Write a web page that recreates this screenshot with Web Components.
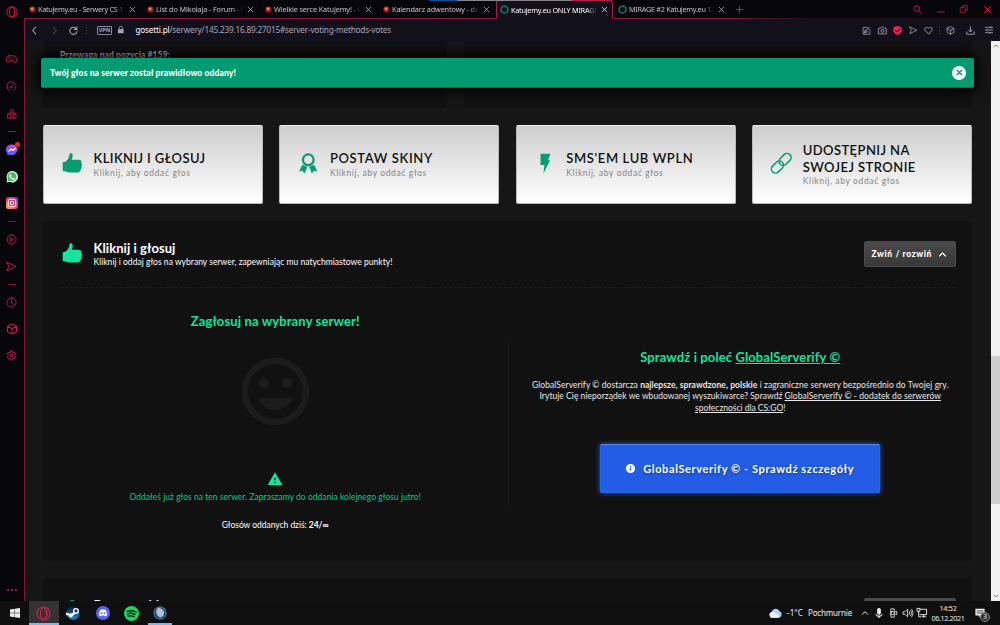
<!DOCTYPE html>
<html lang="pl">
<head>
<meta charset="utf-8">
<title>Katujemy.eu ONLY MIRAGE</title>
<style>
body {
    margin: 0;
    width: 1000px;
    height: 625px;
    overflow: hidden;
    background: #161616;
    color: #fff;
    font-family: Lato, "Open Sans", sans-serif;
}
</style>
</head>
<body>
<browser-window></browser-window>

<script>
const line = (d, w = 2.1) => `<path d="${d}" fill="none" stroke="currentColor" stroke-width="${w}" stroke-linecap="round" stroke-linejoin="round"/>`;
const fill = (d, c = 'currentColor') => `<path d="${d}" fill="${c}" fill-rule="evenodd"/>`;

const ICONS = {
    opera: `<ellipse cx="12" cy="12" rx="10.5" ry="10.5" fill="none" stroke="currentColor" stroke-width="1.8"/><ellipse cx="12" cy="12" rx="5" ry="9" fill="none" stroke="currentColor" stroke-width="1.8"/><path d="M14 2.5c5 3 5 16 0 19" fill="none" stroke="currentColor" stroke-width="1.3"/>`,
    gamepad: line('M6 4h12c3 0 5 4 5 10 0 5-3 6-5 3.500L15.500 14.500h-7l-2.500 3c-2 2.500-5 1.500-5-3.500C1 8 3 4 6 4zM6 9h4M16 8v3'),
    gauge: line('M7 20.500A10 10 0 1 1 20.500 7M21.800 11A10 10 0 0 1 17 20.500M12 13l5-6M10 12a2 2 0 1 0 3 2'),
    bag: line('M3 10h18l1 12H2zM9 10V2h6v8M3 14h18M8 17v4M12 17v4M16 17v4'),
    play: line('M12 2a10 10 0 1 1 0 20a10 10 0 1 1 0-20M9.500 8l6.500 4-6.500 4z'),
    send: line('M2 2.500L22 12L2 21.500L6 12z'),
    clock: line('M12 2a10 10 0 1 1 0 20a10 10 0 1 1 0-20M12 6v7l4 3'),
    cube: line('M12 2l9 4.500v11L12 22l-9-4.500v-11zM3 6.500l9 5 9-5M12 11.500V22'),
    gear: line('M10 2h4l1 3.500 3-1 3 4-2.500 3.500 2.500 3.500-3 4-3-1-1 3.500h-4l-1-3.500-3 1-3-4 2.500-3.500-2.500-3.500 3-4 3 1zM12 9a3 3 0 1 1 0 6a3 3 0 1 1 0-6'),
    dots: fill('M0 12a2.600 2.600 0 1 0 5.200 0a2.600 2.600 0 1 0-5.200 0M9.400 12a2.600 2.600 0 1 0 5.200 0a2.600 2.600 0 1 0-5.200 0M18.800 12a2.600 2.600 0 1 0 5.200 0a2.600 2.600 0 1 0-5.200 0'),
    messenger: `<defs><linearGradient id="m" x1="0" y1="1" x2="1" y2="0"><stop offset="0" stop-color="#168dff"/><stop offset=".55" stop-color="#9a40f4"/><stop offset="1" stop-color="#ff6d70"/></linearGradient></defs><path d="M12 1a11 10.500 0 1 1-5 20l-4 2v-4A10.500 10.500 0 0 1 12 1z" fill="url(#m)"/>` + line('M6 14l4-4 4 3 4-4', 2.4).replace('currentColor', '#fff'),
    whatsapp: fill('M1 23l1.500-6A11.500 11.500 0 1 1 7 21.500z', '#e8f3ea') + fill('M3.500 20.500l1-4A9 9 0 1 1 8 19.500z', '#3fbd55') + fill('M8 6.500l2 .3 1 2.700-1.200 1.500c1 2 2.200 3 4 3.700l1.500-1.500 2.600 1.400c0 2.600-2 3.400-4.500 2.700-4-1.300-7-4.600-7-7.600 0-1.500.6-2.600 1.600-3.200z', '#fff'),
    instagram: `<defs><linearGradient id="i" x1="0" y1="1" x2=".8" y2="0"><stop offset="0" stop-color="#ffc850"/><stop offset=".45" stop-color="#f0404f"/><stop offset=".75" stop-color="#c536a4"/><stop offset="1" stop-color="#6b4bd8"/></linearGradient></defs><rect width="24" height="24" rx="5" fill="url(#i)"/><rect x="4.500" y="4.500" width="15" height="15" rx="4" fill="none" stroke="#fff" stroke-width="2"/><circle cx="12" cy="12" r="3.500" fill="none" stroke="#fff" stroke-width="2"/>`,
    fav: `<circle cx="12" cy="12" r="11" fill="#7c1d16"/><circle cx="11" cy="10" r="7" fill="#d9452f"/><circle cx="10" cy="9" r="3" fill="#f3b08e"/>`,
    ring: `<circle cx="12" cy="12" r="9.500" fill="none" stroke="#078b68" stroke-width="4" stroke-dasharray="9 1"/>`,
    x: line('M4 4l16 16M20 4L4 20', 2.6),
    close: line('M4 4l16 16M20 4L4 20', 4.5),
    plus: line('M12 1v22M1 12h22', 3.2),
    search: line('M10 2a7.500 7.500 0 1 1 0 15a7.500 7.500 0 1 1 0-15M15.500 15.500L22 22', 2.4),
    minimize: line('M2 21h20', 2.4),
    restore: line('M2 8h14v14H2zM8 8V2h14v14h-6', 2.2),
    back: line('M15 3l-8 9 8 9', 2.8),
    forward: line('M9 3l8 9-8 9', 2.8),
    reload: line('M20 8A9.500 9.500 0 1 0 21 15M21 2v7h-7', 2.8),
    lock: fill('M3 10h18v13H3z') + line('M7 10V6a5 5 0 0 1 10 0v4', 2.6),
    edit: line('M12 4H3v18h18v-9M9 15l11-12M6 18l3-8 5 5zM14 4l7 7', 2),
    camera: line('M2 6h5l2-3h6l2 3h5v15H2zM12 9a4 4 0 1 1 0 8a4 4 0 1 1 0-8', 2.2),
    shield: fill('M12 0c3 1.500 6 2 10 2.500 1.500 3 1.500 5 1.500 8C23.500 17 18 22 12 24 6 22 .5 17 .5 10.500c0-3 0-5 1.500-8C6 2 9 1.500 12 0z', '#f5214d') + line('M7 12l4 4 7-8', 2.8).replace('currentColor', '#14101c'),
    heart: line('M12 21L3 12C-1 7 6 0 12 6c6-6 13 1 9 6z', 2.4),
    download: line('M12 2v13M7 11l5 5 5-5M2 16v6h20v-6', 2.4),
    sliders: line('M1 4h22M1 12h22M1 20h22M17 2v4M6 10v4M15 18v4', 2.4),
    up: line('M4 16l8-8 8 8', 3),
    down: line('M4 8l8 8 8-8', 3),
    thumb: fill('M10.500.2c1.400.1 2 1.200 2 2.700 0 2-.7 3.600-1.200 5h8c2.300 0 3.500 1 3.500 2.600 0 .8-.4 1.300-.4 1.300s1 .8 1 2c0 1.300-.8 1.900-.8 1.900s.6.8.4 2c-.2 1.200-1.200 1.700-1.200 1.700s.3 2.400-2 3c-2.500.7-12 1-15.500-.8L.8 21V10.800l3.200-.5C7 8.500 8.800 4.500 8.800 1.300c0-.8.8-1.200 1.700-1.100z'),
    medal: `<circle cx="12" cy="8" r="6.300" fill="none" stroke="currentColor" stroke-width="2.600"/>` + fill('M5.300 13.600c1.400 1.400 3.200 2.200 5.700 2.500l-3.300 8-2.500-3.200-4 .7zM18.700 13.600c-1.400 1.400-3.200 2.200-5.700 2.500l3.300 8 2.500-3.200 4 .7z'),
    bolt: fill('M6.500 1H18l-2.700 7.500h2.500L9.800 24l1.200-10H6.500z'),
    link: `<g fill="none" stroke="currentColor" stroke-width="1.800" transform="rotate(-45 12 12)"><rect x="-2.300" y="7.200" width="16" height="9.600" rx="4.800"/><rect x="10.300" y="7.200" width="16" height="9.600" rx="4.800"/></g>`,
    smile: fill('M11.990 2C6.470 2 2 6.480 2 12s4.470 10 9.990 10C17.520 22 22 17.520 22 12S17.520 2 11.990 2zM12 20.100c-4.470 0-8.100-3.630-8.100-8.100s3.630-8.100 8.100-8.100 8.100 3.630 8.100 8.100-3.630 8.100-8.100 8.100zM15.500 11c.83 0 1.500-.67 1.500-1.500S16.330 8 15.500 8 14 8.670 14 9.500s.67 1.500 1.500 1.500zM8.500 11c.83 0 1.500-.67 1.500-1.500S9.330 8 8.500 8 7 8.670 7 9.500 7.670 11 8.500 11zM12 17.500c2.330 0 4.310-1.460 5.110-3.500H6.890c.8 2.040 2.780 3.500 5.110 3.500z'),
    warning: fill('M1 21h22L12 2zM13 18h-2v-2h2zM13 14h-2v-4h2z'),
    info: fill('M12 2a10 10 0 1 0 0 20a10 10 0 0 0 0-20zM13.200 17h-2.400v-6h2.400zM13.200 9h-2.400V6.600h2.400z'),
    windows: fill('M0 3.500l10.500-1.500v9.500H0zM11.500 1.800L24 0v11.500H11.500zM0 12.500h10.500V22L0 20.500zM11.500 12.500H24V24l-12.500-1.800z'),
    steam: `<defs><linearGradient id="s" x1="0" y1="0" x2="0" y2="1"><stop offset="0" stop-color="#0c1536"/><stop offset="1" stop-color="#1a8fc8"/></linearGradient></defs><circle cx="12" cy="12" r="11.500" fill="url(#s)"/><circle cx="17" cy="8.500" r="4" fill="none" stroke="#fff" stroke-width="2.300"/><circle cx="8.500" cy="16" r="3.500" fill="#fff"/>` + fill('M0 11l8 3.200 5.500-4 3 3L10 18l-10-3z', '#fff'),
    discord: `<circle cx="12" cy="12" r="12" fill="#5865f2"/>` + fill('M8 6.500c2.500-.8 5.500-.8 8 0 2 2.500 3 5.500 3 9.500-1.200 1-2.500 1.500-4 1.700l-.8-1.500h-4.400L9 17.700c-1.500-.2-2.800-.7-4-1.700 0-4 1-7 3-9.500zM9.500 10.500a1.600 1.900 0 1 0 .01 0zM14.500 10.500a1.600 1.900 0 1 0 .01 0z', '#fff'),
    spotify: `<circle cx="12" cy="12" r="12" fill="#1ed760"/>` + line('M5 8.500c5-1.500 10-1 14.500 1.300M5.800 12.300c4-1.200 8.300-.7 12 1.300M6.500 16c3.500-.9 6.800-.5 10 1.200', 2.200).replace('currentColor', '#0d1a11'),
    orb: `<circle cx="12" cy="12" r="11.500" fill="#3a6d92"/><circle cx="12" cy="12" r="9" fill="#1d4361"/><path d="M9 3c5 0 10 4 10 9s-4 8-7 7.500-6.500-5-6.500-9.500 2.500-5 3.500-7z" fill="#b4bddb"/>`,
    cloud: fill('M6 20a5.500 5.500 0 0 1-1-10.800A7.500 7.500 0 0 1 19 7.500 6.500 6.500 0 0 1 18 20z', '#a9d5f5') + fill('M6 20a5.500 5.500 0 0 1-1-10.800c4-1 7 1 7.500 4C16 12 19 15 18 20z', '#e3f2fd'),
    mic: fill('M12 0c3 0 4.500 2 4.500 4.500V12c0 2-2 4-4.500 4s-4.500-2-4.500-4V4.500C7.500 2 9 0 12 0zM4 12c1 5 4 6 8 6s7-1 8-6v4c-1 3-3 4.500-6.500 5v3h-3v-3C7 20.500 5 19 4 16z'),
    webcam: line('M7 8V2h8v6M7 16v6h8v-6M11 8a4 4 0 1 1 0 8a4 4 0 1 1 0-8M16 10l5-2v8l-5-2M7 8a6 6 0 0 0 0 8', 2),
    sound: line('M1 9h4l6-6v18l-6-6H1zM14.500 8c2 2.500 2 5.500 0 8M18 5.500c3.500 4 3.500 9 0 13M21 3c4 5 4 13 0 18', 1.9),
    network: line('M7 3h16v13H7M12 21h9M16 16v5M1 1h6v7H1zM4 8v13h5', 2.200),
    note: fill('M1 2h22v16h-8l-5 5v-5H1z') + line('M5 7h14M5 12h14', 1.800).replace('currentColor', '#101010')
};

class GxIcon extends HTMLElement {
    constructor() {
        super();
        this.attachShadow({ mode: 'open' });
    }

    connectedCallback() {
        const size = this.getAttribute('size') || 12;
        this.shadowRoot.innerHTML = `
<style>
:host { display: block; flex: none; width: ${size}px; height: ${size}px; }
svg { display: block; width: 100%; height: 100%; overflow: visible; }
</style>
<svg viewBox="0 0 24 24">${ICONS[this.getAttribute('name')]}</svg>`;
    }
}

// One line of text, tracked so that it fills the given width
class FitText extends HTMLElement {
    constructor() {
        super();
        this.attachShadow({ mode: 'open' }).innerHTML = `
<style>
:host { display: block; flex: none; width: max-content; white-space: nowrap; }
</style>
<slot></slot>`;
    }

    connectedCallback() {
        const wanted = Number(this.getAttribute('w'));
        this.style.letterSpacing = '0px';
        const natural = this.getBoundingClientRect().width;
        this.style.letterSpacing = (wanted - natural) / this.textContent.trim().length + 'px';
    }
}

class BrowserTab extends HTMLElement {
    constructor() {
        super();
        this.attachShadow({ mode: 'open' });
    }

    connectedCallback() {
        this.shadowRoot.innerHTML = `
<style>
:host {
    box-sizing: border-box;
    display: flex;
    align-items: center;
    width: 118px;
    padding: 0 6px 0 5px;
    border-bottom: 1px solid #8c1533;
    color: #c4c2c8;
    font: 7.300px/18px "Noto Sans", sans-serif;
}
:host([active]) {
    width: 117px;
    border: 1px solid #b31b40;
    border-bottom-color: #13101b;
    border-radius: 3px 3px 0 0;
    background: #13101b;
    color: #fff;
    line-height: 16px;
    padding: 0 4px 0 3px;
}
.label {
    flex: 1;
    overflow: hidden;
    margin: 0 4px 0 2px;
    -webkit-mask-image: linear-gradient(90deg, #000 88%, transparent);
    mask-image: linear-gradient(90deg, #000 88%, transparent);
}
</style>
<gx-icon name="${this.getAttribute('icon')}" size="${this.getAttribute('icon') === 'ring' ? 9 : 7}"></gx-icon>
<div class="label"><slot></slot></div>
<gx-icon name="x" size="7"></gx-icon>`;
    }
}

class TabBar extends HTMLElement {
    constructor() {
        super();
        this.attachShadow({ mode: 'open' }).innerHTML = `
<style>
:host { position: relative; display: flex; height: 19px; background: #07060b; color: #d41e4b; }
.rest { flex: 1; display: flex; align-items: center; border-bottom: 1px solid; border-image: linear-gradient(90deg, #8c1533, #1b101d 30%) 1; padding: 0 8px 0 5px; }
.controls { margin-left: auto; display: flex; gap: 15px; }
.strip { position: absolute; left: 405px; top: 0; width: 183px; height: 1px; background: linear-gradient(90deg, #0b4d8e 28px, #85858a 28px 143px, #b31b40 143px); }
browser-tab { flex: none; }
</style>
<browser-tab icon="fav"><fit-text w="85">Katujemy.eu - Serwery CS 1</fit-text></browser-tab>
<browser-tab icon="fav"><fit-text w="89">List do Mikołaja - Forum - K</fit-text></browser-tab>
<browser-tab icon="fav"><fit-text w="88">Wielkie serce Katujemy! - C</fit-text></browser-tab>
<browser-tab icon="fav"><fit-text w="88">Kalendarz adwentowy - dzi</fit-text></browser-tab>
<browser-tab icon="ring" active><fit-text w="87">Katujemy.eu ONLY MIRAGE</fit-text></browser-tab>
<browser-tab icon="ring"><fit-text w="86">MIRAGE #2 Katujemy.eu 12</fit-text></browser-tab>
<div class="rest">
    <gx-icon name="plus" size="7"></gx-icon>
    <div class="controls">
        <gx-icon name="search" size="9"></gx-icon>
        <gx-icon name="minimize" size="8"></gx-icon>
        <gx-icon name="restore" size="8"></gx-icon>
        <gx-icon name="x" size="9"></gx-icon>
    </div>
</div>
<div class="strip"></div>`;
    }
}

class ToolBar extends HTMLElement {
    constructor() {
        super();
        this.attachShadow({ mode: 'open' }).innerHTML = `
<style>
:host { display: flex; align-items: center; height: 22px; padding: 0 7px 0 5px; background: #12101a; color: #aaa4b9; }
.nav { display: flex; align-items: center; gap: 10.500px; }
.dim { opacity: .35; }
.sep { width: 1px; height: 7px; background: repeating-linear-gradient(#4a4555 0 1px, transparent 1px 3px); margin: 0 10px 0 8px; }
.vpn { box-sizing: border-box; width: 15px; height: 9px; border: 1px solid #8d879c; border-radius: 1px; font: bold 5.500px/7px "Noto Sans", sans-serif; text-align: center; margin-right: 5px; }
.url { margin-left: 11px; font: 8.200px/20px "Noto Sans", sans-serif; }
.url b { color: #fff; font-weight: 400; }
.tools { display: flex; align-items: center; margin-left: auto; gap: 6.500px; }
.tools .sep { margin: 0 0 0 -.500px; }
.wide { margin: 0 4px; }
</style>
<div class="nav">
    <gx-icon name="back" size="9"></gx-icon>
    <gx-icon class="dim" name="forward" size="9"></gx-icon>
    <gx-icon name="reload" size="9"></gx-icon>
</div>
<div class="sep"></div>
<div class="vpn">VPN</div>
<gx-icon name="lock" size="7.500"></gx-icon>
<fit-text class="url" w="255.500"><b>gosetti.pl</b>/serwery/145.239.16.89:27015#server-voting-methods-votes</fit-text>
<div class="tools">
    <gx-icon name="edit" size="9"></gx-icon>
    <gx-icon name="camera" size="9"></gx-icon>
    <gx-icon name="shield" size="9"></gx-icon>
    <gx-icon name="send" size="8.500"></gx-icon>
    <gx-icon name="heart" size="9"></gx-icon>
    <div class="sep"></div>
    <gx-icon name="cube" size="9"></gx-icon>
    <gx-icon class="wide" name="download" size="9"></gx-icon>
    <gx-icon name="sliders" size="8"></gx-icon>
</div>`;
    }
}

class SideBar extends HTMLElement {
    constructor() {
        super();
        this.attachShadow({ mode: 'open' }).innerHTML = `
<style>
:host { box-sizing: border-box; display: flex; flex-direction: column; align-items: center; width: 25px; background: #07060b; color: #c41c46; padding-right: 1px; }
.logo { color: #d41e4b; margin: 6px 0 28.500px; }
.item { position: relative; display: flex; align-items: center; height: 26.900px; }
hr { width: 8px; height: 1px; margin: 4px 0; border: 0; background: #8c1533; }
.badge { position: absolute; right: -2px; top: 6px; width: 5px; height: 5px; border-radius: 50%; background: #fa1e3d; }
.more { margin: auto 0 6px; }
</style>
<gx-icon class="logo" name="opera" size="12"></gx-icon>
<div class="item"><gx-icon name="gamepad" size="11"></gx-icon></div>
<div class="item"><gx-icon name="gauge" size="11"></gx-icon></div>
<div class="item"><gx-icon name="bag" size="10"></gx-icon></div>
<hr>
<div class="item"><gx-icon name="messenger" size="12"></gx-icon><span class="badge"></span></div>
<div class="item"><gx-icon name="whatsapp" size="12"></gx-icon></div>
<div class="item"><gx-icon name="instagram" size="12"></gx-icon></div>
<hr>
<div class="item"><gx-icon name="play" size="11"></gx-icon></div>
<div class="item"><gx-icon name="send" size="11"></gx-icon></div>
<hr>
<div class="item"><gx-icon name="clock" size="11"></gx-icon></div>
<div class="item"><gx-icon name="cube" size="12"></gx-icon></div>
<div class="item"><gx-icon name="gear" size="11"></gx-icon></div>
<gx-icon class="more" name="dots" size="10"></gx-icon>`;
    }
}

class VoteCard extends HTMLElement {
    constructor() {
        super();
        this.attachShadow({ mode: 'open' });
    }

    connectedCallback() {
        this.shadowRoot.innerHTML = `
<style>
:host {
    box-sizing: border-box;
    display: flex;
    align-items: center;
    gap: 11px;
    height: 79px;
    padding-left: 18px;
    border: 1px solid #b9b9b9;
    border-top-color: #eee;
    border-radius: 2px;
    background: linear-gradient(#cdcdcd, #fff);
    color: #111;
    font: 600 13px/16.600px Lato, sans-serif;
}
gx-icon { color: #079c71; margin-bottom: 2px; }
.hint { color: #858585; font: 8.500px/12px Lato, sans-serif; }
</style>
<gx-icon name="${this.getAttribute('icon')}" size="20.500"></gx-icon>
<div>
    <slot></slot>
    <fit-text class="hint" w="97">Kliknij, aby oddać głos</fit-text>
</div>`;
    }
}

class ToastMessage extends HTMLElement {
    constructor() {
        super();
        this.attachShadow({ mode: 'open' }).innerHTML = `
<style>
:host {
    box-sizing: border-box;
    display: flex;
    align-items: center;
    justify-content: space-between;
    height: 30px;
    padding: 0 8px 0 9px;
    border-bottom: 1px solid #087552;
    border-radius: 2px;
    background: #029b71;
    box-shadow: 0 0 14px 3px #000;
    font: 900 8.500px/12px Lato, sans-serif;
}
.close { display: flex; align-items: center; justify-content: center; width: 14px; height: 14px; border-radius: 50%; background: #fff; color: #079c71; }
</style>
<slot></slot>
<div class="close"><gx-icon name="close" size="7"></gx-icon></div>`;
    }
}

class VotePanel extends HTMLElement {
    constructor() {
        super();
        this.attachShadow({ mode: 'open' });
    }

    connectedCallback() {
        this.shadowRoot.innerHTML = `
<style>
:host { box-sizing: border-box; display: block; height: 340px; border-radius: 4px; background: #111; }
header {
    display: flex;
    align-items: center;
    height: 66px;
    margin: 0 16.500px 0 17px;
    padding: 0 0 0 2px;
    border-bottom: 1px dashed #1c1c1c;
}
header gx-icon { color: #12e59d; margin: 0 11px 2px 0; }
.title { font: bold 13px/16px Lato, sans-serif; }
.sub { font: 8.500px/12px Lato, sans-serif; }
.toggle {
    box-sizing: border-box;
    display: flex;
    align-items: center;
    gap: 6px;
    height: 26px;
    width: 92px;
    margin-left: auto;
    padding-left: 7px;
    border: 1px solid #4c4c4c;
    border-radius: 2px;
    background: linear-gradient(#4b4b4b, #383838);
    font: 900 8.500px/12px Lato, sans-serif;
}
.toggle gx-icon { color: #fff; margin: 0; }
</style>
<header>
    <gx-icon name="${this.getAttribute('icon')}" size="20.500"></gx-icon>
    <div>
        <div class="title"><slot name="title"></slot></div>
        <div class="sub"><slot name="sub"></slot></div>
    </div>
    <div class="toggle"><fit-text w="60.500">Zwiń / rozwiń</fit-text><gx-icon name="up" size="9"></gx-icon></div>
</header>
<slot></slot>`;
    }
}

class VoteStatus extends HTMLElement {
    constructor() {
        super();
        this.attachShadow({ mode: 'open' }).innerHTML = `
<style>
:host { display: flex; flex-direction: column; align-items: center; color: #12e59d; font: 8.500px/12px Lato, sans-serif; }
.head { font: bold 13px/16px Lato, sans-serif; margin-top: 25px; }
.face { color: #1c1c1c; margin: 22px 0 39px; }
.text { margin-top: 4px; color: #0cc885; }
.count { color: #fff; margin-top: 16px; }
</style>
<fit-text class="head" w="169">Zagłosuj na wybrany serwer!</fit-text>
<gx-icon class="face" name="smile" size="81"></gx-icon>
<gx-icon name="warning" size="16"></gx-icon>
<fit-text class="text" w="291.500">Oddałeś już głos na ten serwer. Zapraszamy do oddania kolejnego głosu jutro!</fit-text>
<fit-text class="count" w="107">Głosów oddanych dziś: <b>24/∞</b></fit-text>`;
    }
}

class ServerPromo extends HTMLElement {
    constructor() {
        super();
        this.attachShadow({ mode: 'open' }).innerHTML = `
<style>
:host { box-sizing: border-box; display: flex; flex-direction: column; align-items: center; height: 167px; margin-top: 53px; border-left: 1px solid #1a1a1a; font: 8.500px/11.400px Lato, sans-serif; color: #e8e8e8; }
.head { font: bold 13px/16px Lato, sans-serif; color: #12e59d; margin: 8px 0 15px; }
.button {
    box-sizing: border-box;
    display: flex;
    align-items: center;
    gap: 7px;
    width: 280px;
    height: 49px;
    margin-top: 30px;
    padding-left: 24px;
    border: 1px solid #2a62e8;
    border-top-color: #5583ee;
    border-radius: 2px;
    background: #235de5;
    box-shadow: 0 0 5px #2b62d8;
    color: #fff;
    font: bold 11px/14px Lato, sans-serif;
    text-shadow: 0 1px 3px #0006;
}
</style>
<fit-text class="head" w="200">Sprawdź i poleć <u>GlobalServerify ©</u></fit-text>
<fit-text w="416.500">GlobalServerify © dostarcza <b>najlepsze, sprawdzone, polskie</b> i zagraniczne serwery bezpośrednio do Twojej gry.</fit-text>
<fit-text w="401.500">Irytuje Cię nieporządek we wbudowanej wyszukiwarce? Sprawdź <u>GlobalServerify © - dodatek do serwerów</u></fit-text>
<fit-text w="90.500"><u>społeczności dla CS:GO</u>!</fit-text>
<div class="button"><gx-icon name="info" size="11"></gx-icon><fit-text w="211">GlobalServerify © - Sprawdź szczegóły</fit-text></div>`;
    }
}

class ServerPage extends HTMLElement {
    constructor() {
        super();
        this.attachShadow({ mode: 'open' }).innerHTML = `
<style>
:host { position: relative; display: block; overflow: hidden; padding: 0 19px 0 18px; background: #161616; }
.stats { display: grid; grid-template-columns: 404px 1fr; gap: 17px; height: 67px; }
.stats div { padding: 8px 17px; border-radius: 0 0 4px 4px; background: #111; color: #ccc; font: bold 8.500px/12px Lato, sans-serif; }
.cards { display: grid; grid-template-columns: repeat(4, 1fr); gap: 16.700px; margin: 17px 0; }
.columns { display: grid; grid-template-columns: 1fr 1fr; }
vote-panel + vote-panel { margin-top: 17px; }
toast-message { position: absolute; left: 16px; right: 17px; top: 17px; }
</style>
<div class="stats">
    <div><fit-text w="110">Przewaga nad pozycją #159:</fit-text></div>
    <div></div>
</div>
<div class="cards">
    <vote-card icon="thumb"><fit-text w="112">KLIKNIJ I GŁOSUJ</fit-text></vote-card>
    <vote-card icon="medal"><fit-text w="103">POSTAW SKINY</fit-text></vote-card>
    <vote-card icon="bolt"><fit-text w="127">SMS'EM LUB WPLN</fit-text></vote-card>
    <vote-card icon="link"><fit-text w="107">UDOSTĘPNIJ NA</fit-text><fit-text w="113">SWOJEJ STRONIE</fit-text></vote-card>
</div>
<vote-panel icon="thumb">
    <fit-text slot="title" w="82">Kliknij i głosuj</fit-text>
    <fit-text slot="sub" w="299">Kliknij i oddaj głos na wybrany serwer, zapewniając mu natychmiastowe punkty!</fit-text>
    <div class="columns">
        <vote-status></vote-status>
        <server-promo></server-promo>
    </div>
</vote-panel>
<vote-panel icon="medal">
    <fit-text slot="title" w="81">Postaw skiny</fit-text>
    <span slot="sub">&nbsp;</span>
</vote-panel>
<toast-message><fit-text w="186">Twój głos na serwer został prawidłowo oddany!</fit-text></toast-message>`;
    }
}

class PageScrollbar extends HTMLElement {
    constructor() {
        super();
        this.attachShadow({ mode: 'open' }).innerHTML = `
<style>
:host { display: flex; flex-direction: column; align-items: center; background: #f0f0f0; color: #555; padding: 2px 0; }
.thumb { width: 9px; height: 148px; margin: 307px 0 auto; background: #cdcdcd; }
</style>
<gx-icon name="up" size="6"></gx-icon>
<div class="thumb"></div>
<gx-icon name="down" size="6"></gx-icon>`;
    }
}

class TaskBar extends HTMLElement {
    constructor() {
        super();
        this.attachShadow({ mode: 'open' }).innerHTML = `
<style>
:host { display: flex; height: 24px; background: #0f0f0f; color: #eee; font: 8px/10px "Noto Sans", sans-serif; }
.app { box-sizing: border-box; display: flex; align-items: center; justify-content: center; flex: none; width: 29.300px; border-bottom: 2px solid transparent; padding-top: 2px; }
.app:first-child { width: 30px; padding-right: 2px; }
.app.on { background: #333; border-color: #76b9ed; color: #d41e4b; }
.app.run { width: 24px; margin-left: 2px; border-color: #76b9ed; }
.tray { display: flex; align-items: center; margin-left: auto; padding-right: 15px; }
.tray > * { margin-left: 5px; }
.tray > .tight { margin-left: 4px; }
.tray > .arrow { margin-left: 9px; }
.tray > .clock { margin-left: 4px; width: 34px; display: flex; flex-direction: column; align-items: center; font-size: 7.200px; }
.tray > .note { position: relative; margin-left: 10px; }
.note span { position: absolute; left: 5px; top: 4px; width: 8px; height: 8px; border: 1px solid #888; border-radius: 50%; background: #333; font: 7px/8px "Noto Sans", sans-serif; text-align: center; }
</style>
<div class="app"><gx-icon name="windows" size="10"></gx-icon></div>
<div class="app on"><gx-icon name="opera" size="15"></gx-icon></div>
<div class="app"><gx-icon name="steam" size="14"></gx-icon></div>
<div class="app"><gx-icon name="discord" size="14"></gx-icon></div>
<div class="app"><gx-icon name="spotify" size="15"></gx-icon></div>
<div class="app run"><gx-icon name="orb" size="14"></gx-icon></div>
<div class="tray">
    <gx-icon name="cloud" size="13"></gx-icon>
    <fit-text w="16">-1°C</fit-text>
    <fit-text w="44">Pochmurnie</fit-text>
    <gx-icon class="arrow" name="up" size="8"></gx-icon>
    <gx-icon name="mic" size="10"></gx-icon>
    <gx-icon class="tight" name="webcam" size="10"></gx-icon>
    <gx-icon name="sound" size="10"></gx-icon>
    <gx-icon class="tight" name="network" size="10"></gx-icon>
    <div class="clock"><fit-text w="17">14:52</fit-text><fit-text w="33">06.12.2021</fit-text></div>
    <div class="note"><gx-icon name="note" size="10"></gx-icon><span>3</span></div>
</div>`;
    }
}

class BrowserWindow extends HTMLElement {
    constructor() {
        super();
        this.attachShadow({ mode: 'open' }).innerHTML = `
<style>
:host { display: grid; grid-template-rows: 601px 24px; height: 625px; }
.main { display: grid; grid-template-columns: 24px 1fr; }
.view { display: grid; grid-template-rows: 19px 22px 560px; }
side-bar { width: 24px; }
.body { display: grid; grid-template-columns: 1fr 9px; }
tool-bar, .body { border-left: 1px solid #8c1533; }
</style>
<div class="main">
    <side-bar></side-bar>
    <div class="view">
        <tab-bar></tab-bar>
        <tool-bar></tool-bar>
        <div class="body"><server-page></server-page><page-scrollbar></page-scrollbar></div>
    </div>
</div>
<task-bar></task-bar>`;
    }
}

customElements.define('gx-icon', GxIcon);
customElements.define('browser-tab', BrowserTab);
customElements.define('tab-bar', TabBar);
customElements.define('tool-bar', ToolBar);
customElements.define('side-bar', SideBar);
customElements.define('vote-card', VoteCard);
customElements.define('toast-message', ToastMessage);
customElements.define('vote-panel', VotePanel);
customElements.define('vote-status', VoteStatus);
customElements.define('server-promo', ServerPromo);
customElements.define('server-page', ServerPage);
customElements.define('page-scrollbar', PageScrollbar);
customElements.define('task-bar', TaskBar);
customElements.define('browser-window', BrowserWindow);
// last, so the text is measured inside finished layouts
customElements.define('fit-text', FitText);
</script>
</body>
</html>
